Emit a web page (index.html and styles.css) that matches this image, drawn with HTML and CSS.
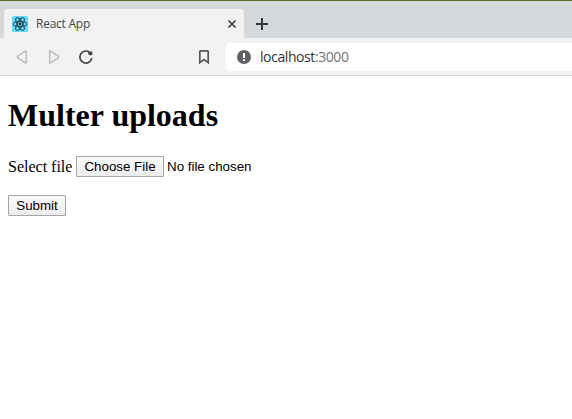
FILE: index.html
```html
<!DOCTYPE html>
<html lang="en">
<head>
<meta charset="utf-8">
<title>React App</title>
<link rel="stylesheet" href="styles.css">
</head>
<body>
<header class="browser">
  <div class="tabs">
    <div class="tab">
      <svg class="favicon" viewBox="0 0 16 16">
        <rect width="16" height="16" rx="1.5" fill="#61dafb"/>
        <g fill="none" stroke="#24414c" stroke-width="0.95">
          <ellipse cx="8" cy="8" rx="7" ry="2.7"/>
          <ellipse cx="8" cy="8" rx="7" ry="2.7" transform="rotate(60 8 8)"/>
          <ellipse cx="8" cy="8" rx="7" ry="2.7" transform="rotate(120 8 8)"/>
        </g>
        <circle cx="8" cy="8" r="1.4" fill="#172f38"/>
      </svg>
      <span class="tab-title">React App</span>
      <svg class="close" viewBox="0 0 10 10"><path d="M1.5 1.5 8.5 8.5M8.5 1.5 1.5 8.5" stroke="#3b3b3b" stroke-width="1.7"/></svg>
    </div>
    <svg class="plus" viewBox="0 0 12 12"><path d="M6 0V12M0 6H12" stroke="#343434" stroke-width="2"/></svg>
  </div>
  <div class="toolbar">
    <svg class="back" viewBox="0 0 16 16"><path d="M11.3 2.7V13.3Q11.3 14.4 10.3 13.8L2.9 8.8Q1.9 8 2.9 7.2L10.3 2.2Q11.3 1.6 11.3 2.7Z" fill="none" stroke="#bbb" stroke-width="1.5"/></svg>
    <svg class="forward" viewBox="0 0 16 16"><path d="M2.7 2.7V13.3Q2.7 14.4 3.7 13.8L11.1 8.8Q12.1 8 11.1 7.2L3.7 2.2Q2.7 1.6 2.7 2.7Z" fill="none" stroke="#bbb" stroke-width="1.5"/></svg>
    <svg class="reload" viewBox="0 0 16 16"><path d="M11.2 3A6 6 0 1 0 13.8 9.2" fill="none" stroke="#454545" stroke-width="1.7"/><circle cx="12.4" cy="4.3" r="2.1" fill="#454545"/></svg>
    <svg class="bookmark" viewBox="0 0 12 16"><path d="M2.6 1.8H9.4Q10.2 1.8 10.2 2.6V13.6L6 10.6 1.8 13.6V2.6Q1.8 1.8 2.6 1.8Z" fill="none" stroke="#555759" stroke-width="1.7"/></svg>
    <div class="address">
      <svg class="info" viewBox="0 0 14 14"><circle cx="7" cy="7" r="7" fill="#5f6164"/><path d="M7 3V8M7 9.2V11" stroke="#fff" stroke-width="2"/></svg>
      <span class="url">localhost<span class="port">:3000</span></span>
    </div>
  </div>
</header>
<main class="page">
  <h1>Multer uploads</h1>
  <form>
    <div class="field">
      <span class="label">Select file</span>
      <button class="button choose" type="button">Choose File</button>
      <span class="status">No file chosen</span>
    </div>
    <button class="button submit" type="button">Submit</button>
  </form>
</main>
</body>
</html>
```
FILE: styles.css
```css
* { box-sizing: border-box; }
body { margin: 0; height: 419px; overflow: hidden; background: #fff; color: #000; font-family: "Liberation Serif", serif; font-size: 16px; }
svg { display: block; flex: none; }
.browser { font-family: "Open Sans", sans-serif; }
.tabs { display: flex; height: 38px; padding: 8px 0 0 4px; border-top: 1px solid #566b25; background: #d5d9dc; }
.tab { display: flex; align-items: center; width: 240px; height: 29px; padding: 0 7px 0 8px; border-radius: 4px 4px 0 0; background: #f2f2f2; }
.favicon { width: 16px; height: 16px; }
.tab-title { flex: 1; margin-left: 8px; font-size: 12px; line-height: 16px; letter-spacing: -0.25px; color: #454545; }
.close { width: 10px; height: 10px; }
.plus { width: 12px; height: 12px; margin: 9px 0 0 12px; }
.toolbar { display: flex; align-items: center; height: 38px; padding-left: 15px; border-bottom: 1px solid #d5d5d5; background: #f2f2f2; }
.back, .forward, .reload { width: 16px; height: 16px; }
.forward { margin-left: 16px; }
.reload { margin-left: 15px; }
.bookmark { width: 12px; height: 16px; margin-left: 104px; }
.address { display: flex; flex: 1; align-items: center; height: 28px; margin-left: 16px; padding-left: 11px; border-radius: 4px 0 0 4px; background: #fff; }
.info { width: 14px; height: 14px; }
.url { margin-left: 9px; font-size: 14px; line-height: 20px; letter-spacing: -0.42px; color: #303235; }
.port { color: #737578; }
.page { padding: 21px 8px 0; }
h1 { margin: 0; font-size: 32px; line-height: 37px; }
.field { display: flex; align-items: center; height: 21px; margin-top: 22px; }
.label { width: 68px; line-height: 18px; white-space: nowrap; }
.button { height: 21px; padding: 0; border: 1px solid #a6a6a6; border-radius: 1px; background: linear-gradient(#fafafa, #ededed); color: #000; font: 13.333px "Liberation Sans", sans-serif; }
.choose { width: 88px; }
.status { margin-left: 3px; font: 13.333px "Liberation Sans", sans-serif; }
.submit { display: block; width: 58px; margin-top: 18px; }
```
